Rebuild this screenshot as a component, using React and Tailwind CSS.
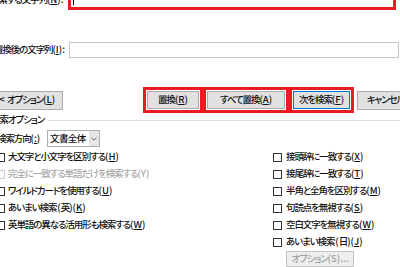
export default function App() {
  const Box = ({ disabled }) => (
    <div
      className={
        disabled
          ? "w-[9px] h-[9px] shrink-0 border border-[#cccccc] bg-white"
          : "w-[9px] h-[9px] shrink-0 border border-[#333333] bg-white"
      }
    />
  );
  const Row = ({ children, disabled, right }) => (
    <div className={right ? "h-[17px] flex items-center gap-[4px]" : "h-[17px] flex items-center gap-[3px]"}>
      <Box disabled={disabled} />
      <span className={disabled ? "text-[#a8a8a8] whitespace-nowrap" : "whitespace-nowrap"}>{children}</span>
    </div>
  );
  const K = ({ k, plain }) => (
    <span className="tracking-[0px]">
      ({plain ? k : <span className="underline underline-offset-1">{k}</span>})
    </span>
  );

  return (
    <div className="w-[400px] h-[267px] overflow-hidden bg-white text-[#111111] text-[9.5px] tracking-[-1.1px] leading-none font-medium font-['Noto_Sans_CJK_JP','Noto_Sans',sans-serif] [font-feature-settings:'palt']">
      <div className="ml-[-14px] w-[440px] flex flex-col">
        {/* row 1 */}
        <div className="-mt-[10px] h-[20px] flex items-center">
          <div className="w-[82px] shrink-0 pl-[4px] whitespace-nowrap">検索する文字列<K k="N" /><span className="tracking-[0px]">:</span></div>
          <div className="w-[328px] h-full border-[3px] border-[#ea1c24] bg-white flex">
            <div className="ml-[2px] w-[1px] h-[12px] bg-black" />
          </div>
        </div>
        {/* row 2 */}
        <div className="mt-[32px] h-[16px] flex items-center">
          <div className="w-[83px] shrink-0 pl-[8px] whitespace-nowrap">置換後の文字列<K k="I" /><span className="tracking-[0px]">:</span></div>
          <div className="w-[330px] h-full border border-[#c6c6c6] bg-white" />
        </div>
        {/* row 3 buttons */}
        <div className="mt-[29px] h-[26px] flex items-center">
          <div className="w-[77px] h-[19px] shrink-0 border border-[#adadad] bg-[#e1e1e1] flex items-center justify-center whitespace-nowrap">
            <span className="tracking-[0px]">&lt;&lt;&nbsp;</span>オプション<K k="L" />
          </div>
          <div className="ml-[80px] w-[60px] h-[26px] shrink-0 border-[3px] border-[#ea1c24] p-[1px] flex">
            <div className="flex-1 border border-[#adadad] bg-[#e1e1e1] flex items-center justify-center whitespace-nowrap">
              置換<K k="R" />
            </div>
          </div>
          <div className="w-[86px] h-[26px] shrink-0 border-[3px] border-[#ea1c24] p-[1px] flex">
            <div className="flex-1 border border-[#adadad] bg-[#e1e1e1] flex items-center justify-center whitespace-nowrap">
              すべて置換<K k="A" />
            </div>
          </div>
          <div className="w-[65px] h-[26px] shrink-0 border-[3px] border-[#ea1c24] p-[1px] flex">
            <div className="flex-1 border border-[#0078d7] bg-[#e1e1e1] flex items-center justify-center whitespace-nowrap">
              次を検索<K k="F" />
            </div>
          </div>
          <div className="ml-[3px] w-[57px] h-[19px] shrink-0 border border-[#adadad] bg-[#e1e1e1] flex items-center justify-center whitespace-nowrap">
            キャンセル
          </div>
        </div>
        {/* group header */}
        <div className="mt-[1px] h-[12px] flex items-center pl-[5px]">
          <span className="whitespace-nowrap">検索オプション</span>
          <div className="ml-[4px] flex-1 border-t border-[#dcdcdc]" />
        </div>
        {/* search direction */}
        <div className="mt-[4px] h-[17px] flex items-center pl-[11px]">
          <div className="w-[50px] shrink-0 whitespace-nowrap">検索方向<K k=":" /></div>
          <div className="w-[53px] h-[17px] border border-[#adadad] bg-white flex">
            <div className="flex-1 flex items-center pl-[2px] whitespace-nowrap tracking-[-0.6px]">文書全体</div>
            <div className="w-[10px] bg-[#e6e6e6] flex items-center justify-center">
              <svg width="6" height="4" viewBox="0 0 6 4">
                <path d="M0.5 0.5 L3 3.2 L5.5 0.5" fill="none" stroke="#606060" strokeWidth="0.9" />
              </svg>
            </div>
          </div>
        </div>
        {/* options grid */}
        <div className="mt-[1.5px] flex">
          <div className="w-[287px] shrink-0 pl-[10px] flex flex-col">
            <Row>大文字と小文字を区別する<K k="H" /></Row>
            <Row disabled>完全に一致する単語だけを検索する<K k="Y" plain /></Row>
            <Row>ワイルドカードを使用する<K k="U" /></Row>
            <Row>あいまい検索&nbsp;<span className="tracking-[0px]">(</span>英<span className="tracking-[0px]">)</span><K k="K" /></Row>
            <Row>英単語の異なる活用形も検索する<K k="W" /></Row>
          </div>
          <div className="flex flex-col">
            <Row right>接頭辞に一致する<K k="X" /></Row>
            <Row right>接尾辞に一致する<K k="T" /></Row>
            <Row right>半角と全角を区別する<K k="M" /></Row>
            <Row right>句読点を無視する<K k="S" /></Row>
            <Row right>空白文字を無視する<K k="W" /></Row>
            <Row right>あいまい検索&nbsp;<span className="tracking-[0px]">(</span>日<span className="tracking-[0px]">)</span><K k="J" /></Row>
            <div className="ml-[13px] w-[68px] h-[16px] border border-[#c4c4c4] bg-[#eeeeee] text-[#a0a0a0] flex items-center justify-center whitespace-nowrap">
              オプション<span className="tracking-[0px]">(S)...</span>
            </div>
          </div>
        </div>
      </div>
    </div>
  );
}
